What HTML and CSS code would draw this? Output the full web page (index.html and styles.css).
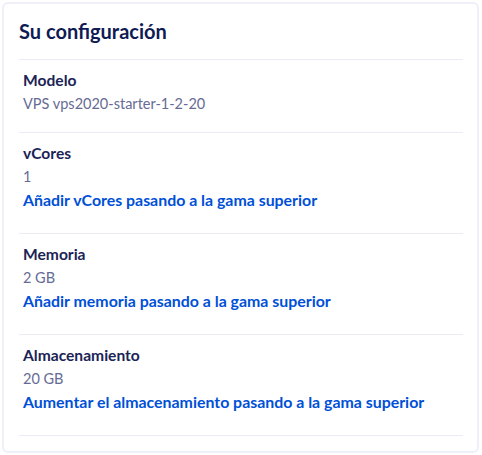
FILE: index.html
```html
<!DOCTYPE html>
<html lang="es">
<head>
<meta charset="utf-8">
<link rel="stylesheet" href="styles.css">
</head>
<body>
<section class="card">
  <h2 class="title">Su configuración</h2>
  <ul class="list">
    <li class="item">
      <div class="label">Modelo</div>
      <div class="value">VPS vps2020-starter-1-2-20</div>
    </li>
    <li class="item">
      <div class="label">vCores</div>
      <div class="value">1</div>
      <a class="link" href="#">Añadir vCores pasando a la gama superior</a>
    </li>
    <li class="item">
      <div class="label">Memoria</div>
      <div class="value">2 GB</div>
      <a class="link" href="#">Añadir memoria pasando a la gama superior</a>
    </li>
    <li class="item">
      <div class="label">Almacenamiento</div>
      <div class="value">20 GB</div>
      <a class="link" href="#">Aumentar el almacenamiento pasando a la gama superior</a>
    </li>
  </ul>
</section>
</body>
</html>
```
FILE: styles.css
```css
html, body {
  margin: 0;
  padding: 0;
  background: #ffffff;
}
body {
  padding: 2px 3px 2px 2px;
  font-family: Lato, "Liberation Sans", sans-serif;
}
.card {
  border: 2px solid #efeffa;
  border-radius: 6px;
  background: #fff;
  padding: 14px 14px 0 15px;
  height: 451px;
  box-sizing: border-box;
}
.title {
  margin: 0;
  font-size: 20px;
  font-weight: 700;
  color: #0f1b54;
  line-height: 26px;
  padding: 0 0 15px 0;
  border-bottom: 1px solid #ebebf3;
}
.list {
  list-style: none;
  margin: 0;
  padding: 0;
}
.item {
  display: flex;
  flex-direction: column;
  align-items: flex-start;
  padding: 9px 4px 17px;
  border-bottom: 1px solid #ebebf3;
}
.label {
  font-size: 15.6px;
  font-weight: 700;
  color: #1b2456;
  line-height: 23px;
}
.value {
  font-size: 14.5px;
  color: #666b94;
  line-height: 23px;
}
.link {
  font-size: 15.9px;
  font-weight: 700;
  color: #0050d7;
  text-decoration: none;
  line-height: 23px;
  margin-bottom: 5px;
}
```
